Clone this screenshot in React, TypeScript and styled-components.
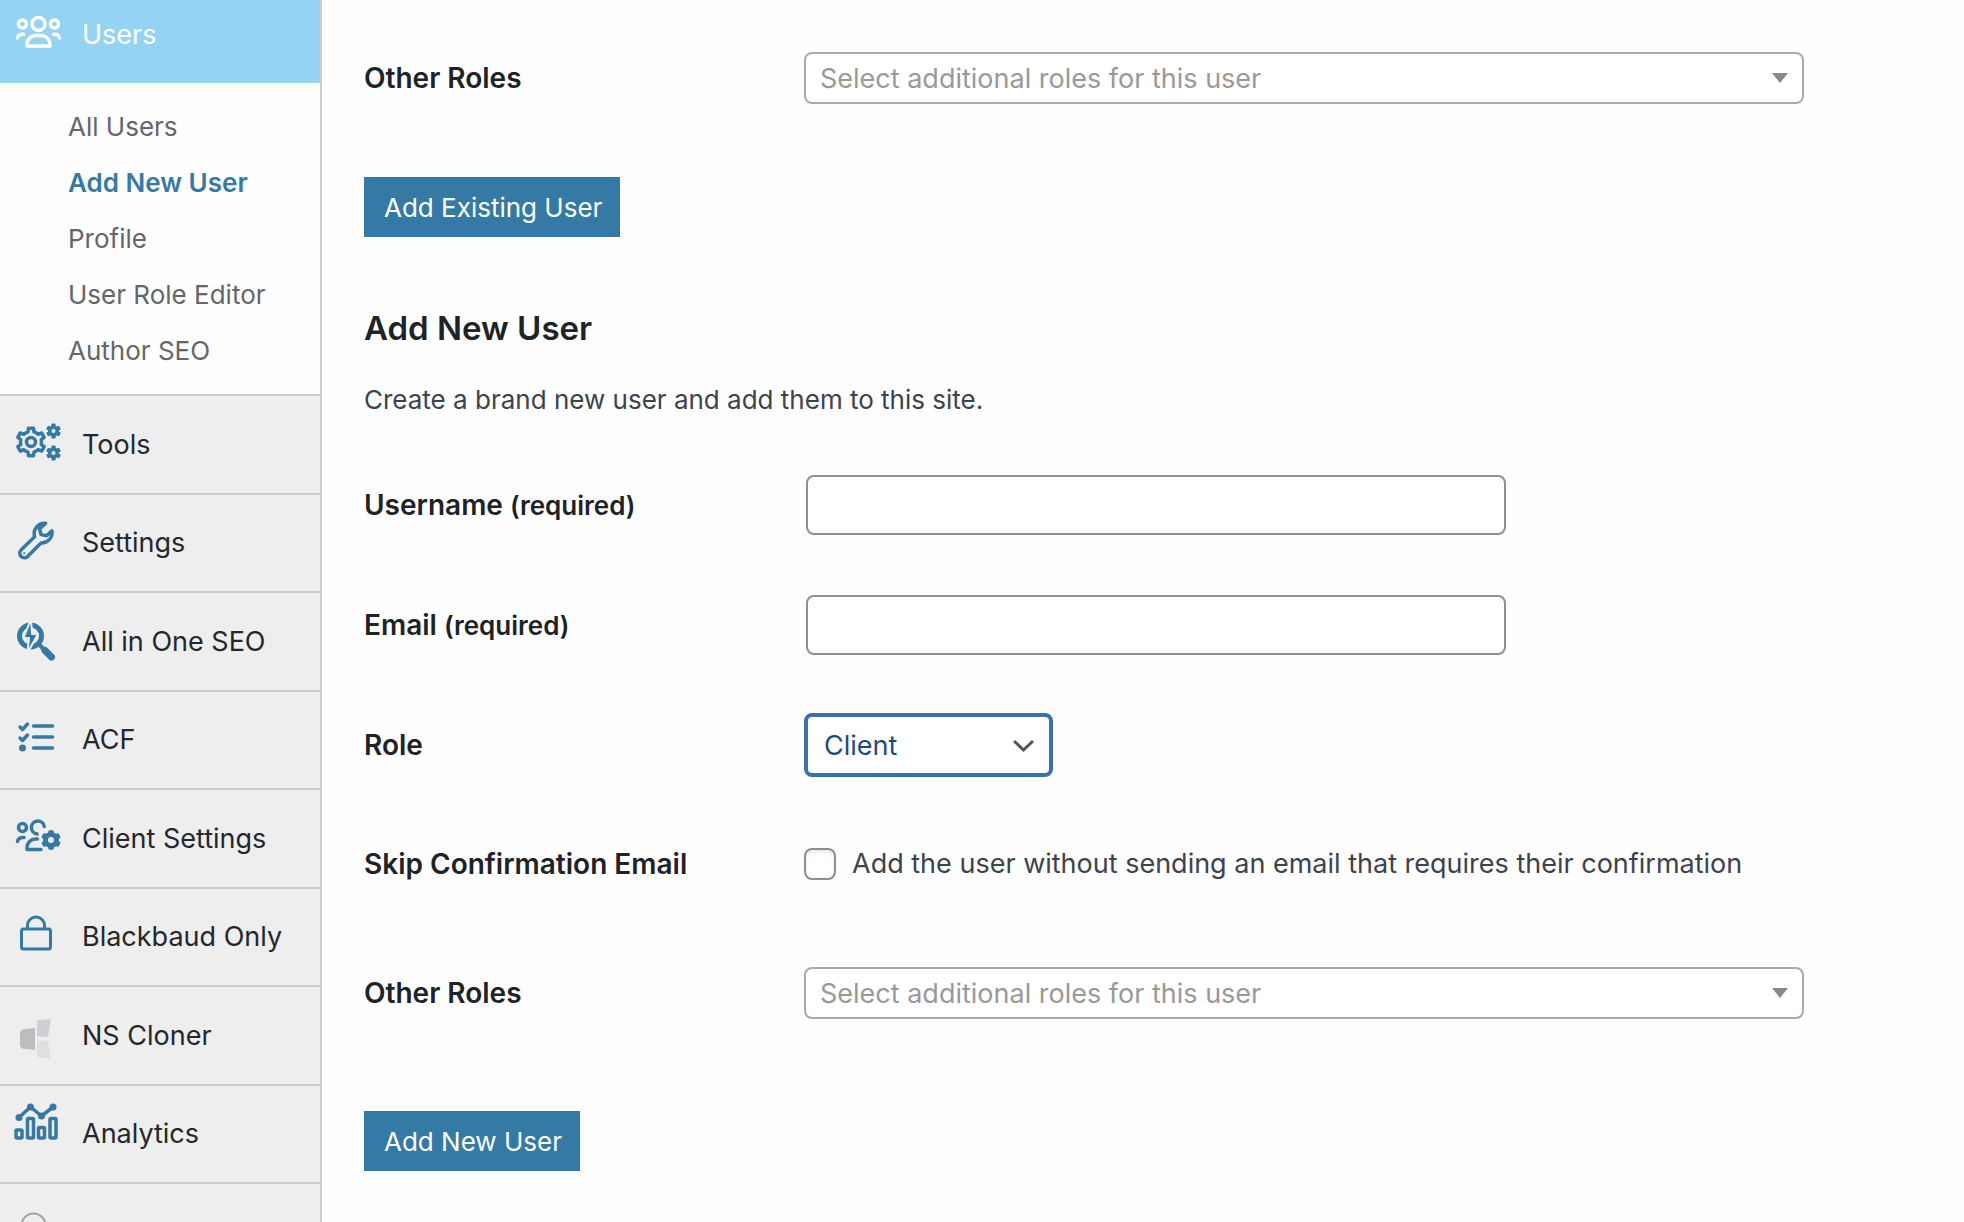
import React from 'react';
import styled, { createGlobalStyle } from 'styled-components';

const colors = {
  accent: '#357aa5',
  rail: '#eeeeee',
  line: '#cbcbd1',
  ink: '#1d2327',
  body: '#3c434a',
  field: '#8c8f94',
  muted: '#999999',
};

const GlobalStyle = createGlobalStyle`
  * { box-sizing: border-box; }
  html, body { height: 100%; }
  body {
    margin: 0;
    overflow: hidden;
    background: #fefefe;
    color: ${colors.body};
    font-family: Inter, "Noto Sans", sans-serif;
    font-size: 27px;
    line-height: 36px;
  }
  #root { height: 100%; }
`;

const Page = styled.div`
  display: flex;
  height: 100%;
  overflow: hidden;
`;

const Sidebar = styled.nav`
  flex: 0 0 322px;
  overflow: hidden;
  background: ${colors.rail};
  border-right: 2px solid ${colors.line};
`;

const Menu = styled.ul`
  margin: 0;
  padding: 0;
  list-style: none;
`;

const CurrentLink = styled.a`
  display: flex;
  height: 83px;
  padding-bottom: 14px;
  align-items: center;
  background: #95d3f3;
  color: #ffffff;
  text-decoration: none;
`;

const MenuLink = styled.a`
  display: flex;
  align-items: center;
  height: 99px;
  border-top: 2px solid ${colors.line};
  color: #23282d;
  text-decoration: none;

  li:nth-child(odd) > & {
    height: 98px;
  }
`;

const Icon = styled.svg`
  flex: none;
  width: 82px;
  height: 68px;
  color: ${colors.accent};
  fill: none;
  stroke: currentColor;
  stroke-width: 3.5;
  stroke-linecap: round;
  stroke-linejoin: round;

  ${CurrentLink} & {
    color: #ffffff;
  }
`;

const Submenu = styled.ul`
  height: 311px;
  margin: 0;
  padding: 16px 0 0 68px;
  background: #fefefe;
  list-style: none;
`;

const SubmenuLink = styled.a<{ $active?: boolean }>`
  display: block;
  font-size: 26px;
  line-height: 56px;
  font-weight: ${(p) => (p.$active ? 600 : 400)};
  color: ${(p) => (p.$active ? colors.accent : '#646669')};
  text-decoration: none;
`;

const Main = styled.main`
  flex: 1;
  min-width: 0;
  padding: 8px 42px 0;
`;

const FormRow = styled.div<{ $height?: number }>`
  display: grid;
  grid-template-columns: 440px 1fr;
  align-items: center;
  min-height: ${(p) => p.$height ?? 120}px;
`;

const Label = styled.label`
  color: ${colors.ink};
  font-size: 28px;
  font-weight: 600;
`;

const Required = styled.span`
  font-size: 26px;
`;

const SectionTitle = styled.h2`
  margin: 71px 0 0;
  color: ${colors.ink};
  font-size: 33px;
  line-height: 40px;
  font-weight: 600;
`;

const Intro = styled.p`
  margin: 34px 0 27px;
  font-size: 26px;
`;

const TextInput = styled.input`
  width: 100%;
  max-width: 700px;
  height: 60px;
  margin: 0 2px;
  padding: 0 16px;
  border: 2px solid ${colors.field};
  border-radius: 8px;
  background: #ffffff;
  color: ${colors.ink};
  font: inherit;
  outline: none;
`;

const SelectWrap = styled.div<{ $wide?: boolean }>`
  position: relative;
  width: ${(p) => (p.$wide ? '100%' : '249px')};
  max-width: 1000px;
`;

const Select = styled.select<{ $wide?: boolean }>`
  display: block;
  appearance: none;
  width: 100%;
  height: ${(p) => (p.$wide ? 52 : 64)}px;
  padding: 2px ${(p) => (p.$wide ? 14 : 16)}px 0;
  border: ${(p) => (p.$wide ? '2px solid #aaaaaa' : '4px solid #3a6fb0')};
  border-radius: 8px;
  background: #ffffff;
  color: ${(p) => (p.$wide ? colors.muted : '#1d4b79')};
  font: inherit;
  outline: none;
`;

const Arrow = styled.svg`
  position: absolute;
  top: 0;
  right: 16px;
  height: 100%;
  pointer-events: none;
`;

const CheckLabel = styled.label`
  display: flex;
  align-items: center;
  gap: 16px;
`;

const Checkbox = styled.input`
  appearance: none;
  flex: none;
  width: 32px;
  height: 32px;
  margin: 0;
  border: 2px solid ${colors.field};
  border-radius: 8px;
  background: #ffffff;
  box-shadow: inset 0 2px 4px rgba(0, 0, 0, 0.1);
`;

const SubmitButton = styled.button<{ $gap: number }>`
  display: block;
  height: 60px;
  margin: ${(p) => p.$gap}px 0 0;
  padding: 2px 18px 0 20px;
  border: 0;
  background: ${colors.accent};
  color: #ffffff;
  font: inherit;
  font-size: 26px;
`;

/* Points of a cog outline: n teeth between an inner and an outer radius. */
function cog(cx: number, cy: number, inner: number, outer: number, n: number) {
  const step = (Math.PI * 2) / n;
  const pts: string[] = [];
  for (let i = 0; i < n; i += 1) {
    const mid = i * step - Math.PI / 2;
    [
      [-0.28, inner],
      [-0.17, outer],
      [0.17, outer],
      [0.28, inner],
      [0.5, inner],
    ].forEach(([k, r]) => {
      const a = mid + k * step;
      pts.push(`${(cx + r * Math.cos(a)).toFixed(2)},${(cy + r * Math.sin(a)).toFixed(2)}`);
    });
  }
  return pts.join(' ');
}

const UsersIcon = () => (
  <Icon viewBox="0 0 82 68" aria-hidden="true">
    <circle cx="38.5" cy="23" r="6.5" />
    <circle cx="22.5" cy="23" r="4" />
    <circle cx="54.5" cy="23" r="4" />
    <path d="M27 45v-1.500a9 9 0 0 1 9-9h5a9 9 0 0 1 9 9V45z" />
    <path d="M17.500 37c.5-2.500 3-4 6-3.800M59.500 37c-.5-2.500-3-4-6-3.800" />
  </Icon>
);

const ToolsIcon = () => (
  <Icon viewBox="0 0 82 68" aria-hidden="true">
    <polygon points={cog(31, 31, 10.5, 14, 6)} />
    <circle cx="31" cy="31" r="4.5" />
    <g strokeWidth="2">
      <polygon points={cog(53.5, 20, 4.5, 6.5, 6)} fill="currentColor" />
      <polygon points={cog(53.5, 42, 4.5, 6.5, 6)} fill="currentColor" />
    </g>
    <g fill={colors.rail} stroke="none">
      <circle cx="53.5" cy="20" r="2" />
      <circle cx="53.5" cy="42" r="2" />
    </g>
  </Icon>
);

const WrenchIcon = () => (
  <Icon viewBox="0 0 82 68" aria-hidden="true">
    <path d="M45.700 14.300a10.500 10.500 0 0 0-11.100 13.400L21 41.100a4.600 4.600 0 0 0 6.500 6.500L41.100 34a10.500 10.500 0 0 0 10.800-12.300l-5.400 5.100-5.500-1.200-1.400-5.600z" />
    <circle cx="24.200" cy="44.200" r="1" fill="currentColor" stroke="none" />
  </Icon>
);

const SeoIcon = () => (
  <Icon viewBox="0 0 82 68" aria-hidden="true">
    <circle cx="30.5" cy="28" r="11" strokeWidth="5" />
    <path d="M39 36.500l5 5" strokeWidth="4" />
    <path d="M45 42.500l6.500 6.500" strokeWidth="7" />
    <path d="M31 11l-7.500 19h5.500l-1.500 15L38 26h-6z" fill="currentColor" stroke={colors.rail} strokeWidth="2" />
  </Icon>
);

const ChecklistIcon = () => (
  <Icon viewBox="0 0 82 68" aria-hidden="true">
    <path d="M33.500 20h19M33.500 31h19M33.500 42h19" />
    <path d="M20 21l2.500 2.500 5-5.500M20 32l2.500 2.500 5-5.500" />
    <circle cx="22.5" cy="42" r="3.5" fill="currentColor" stroke="none" />
  </Icon>
);

const ClientIcon = () => (
  <Icon viewBox="0 0 82 68" aria-hidden="true">
    <path d="M37 29a6.500 6.500 0 1 1 7.300-7.500" />
    <circle cx="22.5" cy="22.5" r="4" />
    <path d="M17.500 36.500c.5-2.800 3-4.500 6.500-4M37.500 34h-2a8.500 8.500 0 0 0-8.500 8.500v2h14" />
    <polygon points={cog(51, 35, 7, 9, 6)} fill="currentColor" strokeWidth="2" />
    <circle cx="51" cy="35" r="3" fill={colors.rail} stroke="none" />
  </Icon>
);

const LockIcon = () => (
  <Icon viewBox="0 0 82 68" aria-hidden="true">
    <g strokeWidth="3">
      <rect x="21.5" y="26" width="29" height="20" rx="2" />
      <path d="M27.500 25.500v-3a8.500 8.500 0 0 1 17 0v3" />
    </g>
  </Icon>
);

const ClonerIcon = () => (
  <Icon viewBox="0 0 82 68" aria-hidden="true">
    <g stroke="none">
      <path d="M20 30l2-2.500 13-1.500v22l-13-1.500-2-2.500z" fill="#bdbdbf" />
      <path d="M37 18.500l14-1.500-3 18-11-.5z" fill="#cfcfd3" />
      <path d="M37 39l11-.5 3 18.500-14-2z" fill="#dfdfe1" />
    </g>
  </Icon>
);

const AnalyticsIcon = () => (
  <Icon viewBox="0 0 82 68" aria-hidden="true">
    <path d="M19 17.500L30.500 7l11 9L53 7" />
    <g fill="currentColor" stroke="none">
      <circle cx="19" cy="17.5" r="3.5" />
      <circle cx="30.5" cy="7" r="3.5" />
      <circle cx="41.5" cy="16" r="3.5" />
      <circle cx="53" cy="7" r="3.5" />
    </g>
    <rect x="16" y="30" width="6" height="8" rx="1" />
    <rect x="27.5" y="18.5" width="6" height="19.5" rx="1" />
    <rect x="38.5" y="27.5" width="6" height="10.5" rx="1" />
    <rect x="50" y="18.5" width="6" height="19.5" rx="1" />
  </Icon>
);

const CircleIcon = () => (
  <Icon viewBox="0 0 82 68" aria-hidden="true">
    <circle cx="33.5" cy="26.5" r="12" stroke="#a0a3a7" strokeWidth="2" />
  </Icon>
);

const submenu = ['All Users', 'Add New User', 'Profile', 'User Role Editor', 'Author SEO'];

const menu = [
  { label: 'Tools', icon: ToolsIcon },
  { label: 'Settings', icon: WrenchIcon },
  { label: 'All in One SEO', icon: SeoIcon },
  { label: 'ACF', icon: ChecklistIcon },
  { label: 'Client Settings', icon: ClientIcon },
  { label: 'Blackbaud Only', icon: LockIcon },
  { label: 'NS Cloner', icon: ClonerIcon },
  { label: 'Analytics', icon: AnalyticsIcon },
  { label: 'All Import', icon: CircleIcon },
];

function RolesRow({ id }: { id: string }) {
  return (
    <FormRow $height={140}>
      <Label htmlFor={id}>Other Roles</Label>
      <SelectWrap $wide>
        <Select id={id} $wide defaultValue="">
          <option value="">Select additional roles for this user</option>
        </Select>
        <Arrow width="16" viewBox="0 0 16 10" aria-hidden="true">
          <path d="M0 0h16L8 10z" fill="#888a8e" />
        </Arrow>
      </SelectWrap>
    </FormRow>
  );
}

export default function App() {
  return (
    <Page>
      <GlobalStyle />
      <Sidebar aria-label="Main menu">
        <Menu>
          <li>
            <CurrentLink href="#users">
              <UsersIcon />
              Users
            </CurrentLink>
            <Submenu>
              {submenu.map((name) => (
                <li key={name}>
                  <SubmenuLink href="#users" $active={name === 'Add New User'}>
                    {name}
                  </SubmenuLink>
                </li>
              ))}
            </Submenu>
          </li>
          {menu.map(({ label, icon: Glyph }) => (
            <li key={label}>
              <MenuLink href="#menu">
                <Glyph />
                {label}
              </MenuLink>
            </li>
          ))}
        </Menu>
      </Sidebar>
      <Main>
        <form onSubmit={(e) => e.preventDefault()}>
          <RolesRow id="existing-roles" />
          <SubmitButton $gap={29}>Add Existing User</SubmitButton>
        </form>
        <SectionTitle>Add New User</SectionTitle>
        <Intro>Create a brand new user and add them to this site.</Intro>
        <form onSubmit={(e) => e.preventDefault()}>
          <FormRow>
            <Label htmlFor="username">
              Username <Required>(required)</Required>
            </Label>
            <TextInput id="username" type="text" />
          </FormRow>
          <FormRow>
            <Label htmlFor="email">
              Email <Required>(required)</Required>
            </Label>
            <TextInput id="email" type="email" />
          </FormRow>
          <FormRow>
            <Label htmlFor="role">Role</Label>
            <SelectWrap>
              <Select id="role" defaultValue="client">
                <option value="client">Client</option>
              </Select>
              <Arrow width="24" viewBox="0 0 24 16" aria-hidden="true">
                <path d="M1 4l9.500 9L20 4" fill="none" stroke="#50555a" strokeWidth="3" />
              </Arrow>
            </SelectWrap>
          </FormRow>
          <FormRow $height={118}>
            <Label htmlFor="skip">Skip Confirmation Email</Label>
            <CheckLabel>
              <Checkbox id="skip" type="checkbox" />
              Add the user without sending an email that requires their confirmation
            </CheckLabel>
          </FormRow>
          <RolesRow id="new-roles" />
          <SubmitButton $gap={48}>Add New User</SubmitButton>
        </form>
      </Main>
    </Page>
  );
}
